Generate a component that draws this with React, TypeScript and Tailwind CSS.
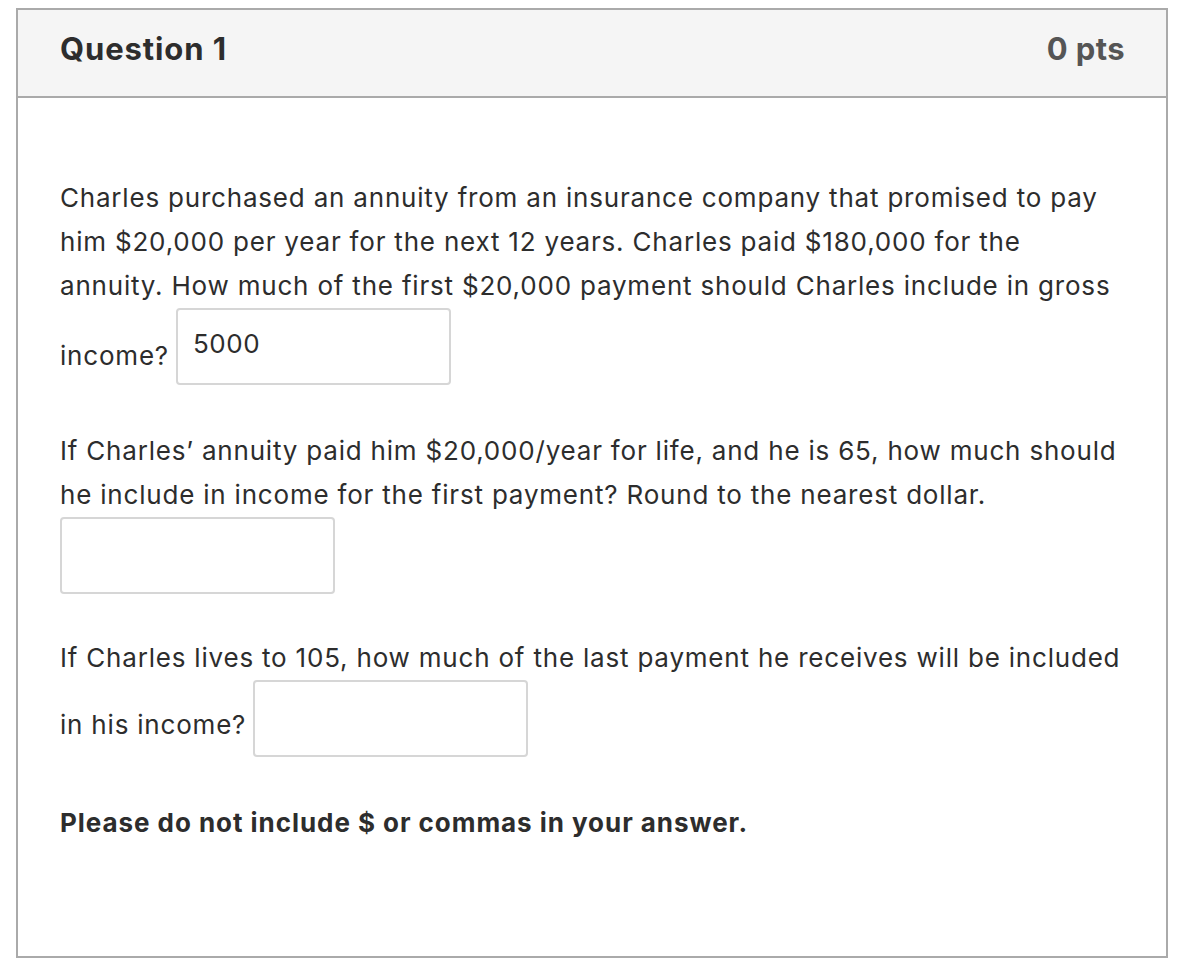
import React from "react";

const font = { fontFamily: "Inter, 'Open Sans', sans-serif" };

function Box({ value }: { value?: string }) {
  return (
    <div className="h-[77px] w-[275px] shrink-0 rounded-[4px] border-2 border-[#d6d6d6] bg-white pl-[15px] pt-[19px] text-[26px] leading-[30px] tracking-[0.6px] text-[#2d2d2d]">
      {value}
    </div>
  );
}

export default function App() {
  return (
    <div className="min-h-[980px] bg-white pt-[8px] pl-[16px]" style={font}>
      <div className="flex h-[950px] w-[1152px] flex-col border-2 border-[#aaaaaa]">
        <div className="flex h-[88px] shrink-0 items-start justify-between border-b-2 border-[#aaaaaa] bg-[#f5f5f5] pl-[42px] pr-[41px] pt-[21px]">
          <div className="text-[31px] font-bold leading-[36px] tracking-[0.9px] text-[#2d2d2d]">
            Question 1
          </div>
          <div className="text-[31px] font-bold leading-[36px] tracking-[0.4px] text-[#555555]">
            0 pts
          </div>
        </div>
        <div className="pl-[42px] pr-[40px] pt-[78px] text-[26px] leading-[44px] tracking-[0.8px] text-[#2d2d2d]">
          <p>
            Charles purchased an annuity from an insurance company that promised to pay him
            $20,000 per year for the next 12 years. Charles paid $180,000 for the annuity. How
            much of the first $20,000 payment should Charles include in gross
          </p>
          <div className="flex items-end">
            <span className="pb-[7px] pr-[7px]">income?</span>
            <Box value="5000" />
          </div>
          <p className="mt-[44px]">
            If Charles’ annuity paid him $20,000/year for life, and he is 65, how much should he
            include in income for the first payment? Round to the nearest dollar.
          </p>
          <Box />
          <p className="mt-[42px]">
            If Charles lives to 105, how much of the last payment he receives will be included
          </p>
          <div className="flex items-end">
            <span className="pb-[10px] pr-[7px]">in his income?</span>
            <Box />
          </div>
          <p className="mt-[44px] font-bold tracking-[0.95px]">
            Please do not include $ or commas in your answer.
          </p>
        </div>
      </div>
    </div>
  );
}
